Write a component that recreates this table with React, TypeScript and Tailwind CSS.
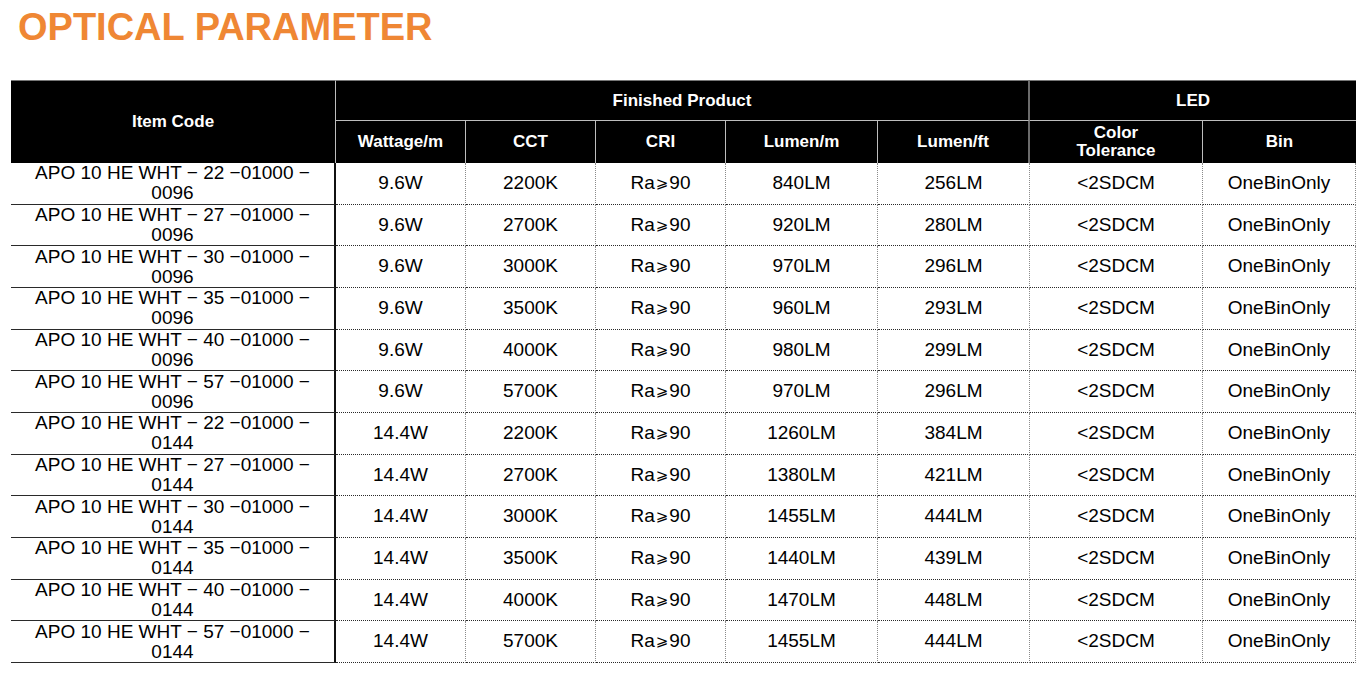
const rows = [
  ["22", "0096", "9.6W", "2200K", "840LM", "256LM"],
  ["27", "0096", "9.6W", "2700K", "920LM", "280LM"],
  ["30", "0096", "9.6W", "3000K", "970LM", "296LM"],
  ["35", "0096", "9.6W", "3500K", "960LM", "293LM"],
  ["40", "0096", "9.6W", "4000K", "980LM", "299LM"],
  ["57", "0096", "9.6W", "5700K", "970LM", "296LM"],
  ["22", "0144", "14.4W", "2200K", "1260LM", "384LM"],
  ["27", "0144", "14.4W", "2700K", "1380LM", "421LM"],
  ["30", "0144", "14.4W", "3000K", "1455LM", "444LM"],
  ["35", "0144", "14.4W", "3500K", "1440LM", "439LM"],
  ["40", "0144", "14.4W", "4000K", "1470LM", "448LM"],
  ["57", "0144", "14.4W", "5700K", "1455LM", "444LM"],
];

const cell = "flex items-center justify-center border-b border-b-[#2a2a2a] border-r border-dotted border-r-[#8a8a8a]";

export default function App() {
  return (
    <div className="min-h-screen bg-white text-black" style={{ fontFamily: '"Liberation Sans", Arial, sans-serif' }}>
      {/* Title */}
      <h1 className="pl-[18px] pt-[8px] text-[38px] font-bold leading-[38px] text-[#EF8734]">
        OPTICAL PARAMETER
      </h1>

      {/* Table */}
      <div className="ml-[11px] mt-[34px] grid w-[1345px] grid-cols-[325px_130px_130px_130px_152px_152px_173px_153px] grid-rows-[41px_42px_repeat(12,41.67px)] text-[19px]">
        {/* header */}
        <div className="row-span-2 flex items-center justify-center border-t border-t-[#777] border-r border-r-[#bdbdbd] bg-black text-[17px] font-bold text-white">
          Item Code
        </div>
        <div className="col-span-5 flex items-center justify-center border-t border-t-[#777] border-b border-b-[#bdbdbd] border-r-2 border-r-[#6b6b6b] bg-black text-[17px] font-bold text-white">
          Finished Product
        </div>
        <div className="col-span-2 flex items-center justify-center border-t border-t-[#777] border-b border-b-[#bdbdbd] bg-black text-[17px] font-bold text-white">
          LED
        </div>
        {["Wattage/m", "CCT", "CRI", "Lumen/m"].map((h) => (
          <div key={h} className="flex items-center justify-center border-r border-r-[#bdbdbd] bg-black text-[17px] font-bold text-white">
            {h}
          </div>
        ))}
        <div className="flex items-center justify-center border-r-2 border-r-[#6b6b6b] bg-black text-[17px] font-bold text-white">
          Lumen/ft
        </div>
        <div className="flex items-center justify-center border-r border-r-[#bdbdbd] bg-black text-center text-[17px] font-bold leading-[18px] text-white">
          Color
          <br />
          Tolerance
        </div>
        <div className="flex items-center justify-center bg-black text-[17px] font-bold text-white">Bin</div>

        {/* body */}
        {rows.map(([cct, len, w, k, lm, lft], i) => (
          <div key={i} className="contents">
            <div className="flex items-center justify-center border-b border-b-[#2a2a2a] border-r-2 border-r-[#111] text-center leading-[20px]">
              APO 10 HE WHT − {cct} −01000 −
              <br />
              {len}
            </div>
            <div className={cell}>{w}</div>
            <div className={cell}>{k}</div>
            <div className={cell}>
              Ra<span style={{ fontFamily: '"DejaVu Sans", sans-serif' }} className="mx-[1px] text-[15px]">⩾</span>90
            </div>
            <div className={cell}>{lm}</div>
            <div className={cell}>{lft}</div>
            <div className={cell}>&lt;2SDCM</div>
            <div className={cell}>OneBinOnly</div>
          </div>
        ))}
      </div>
    </div>
  );
}
